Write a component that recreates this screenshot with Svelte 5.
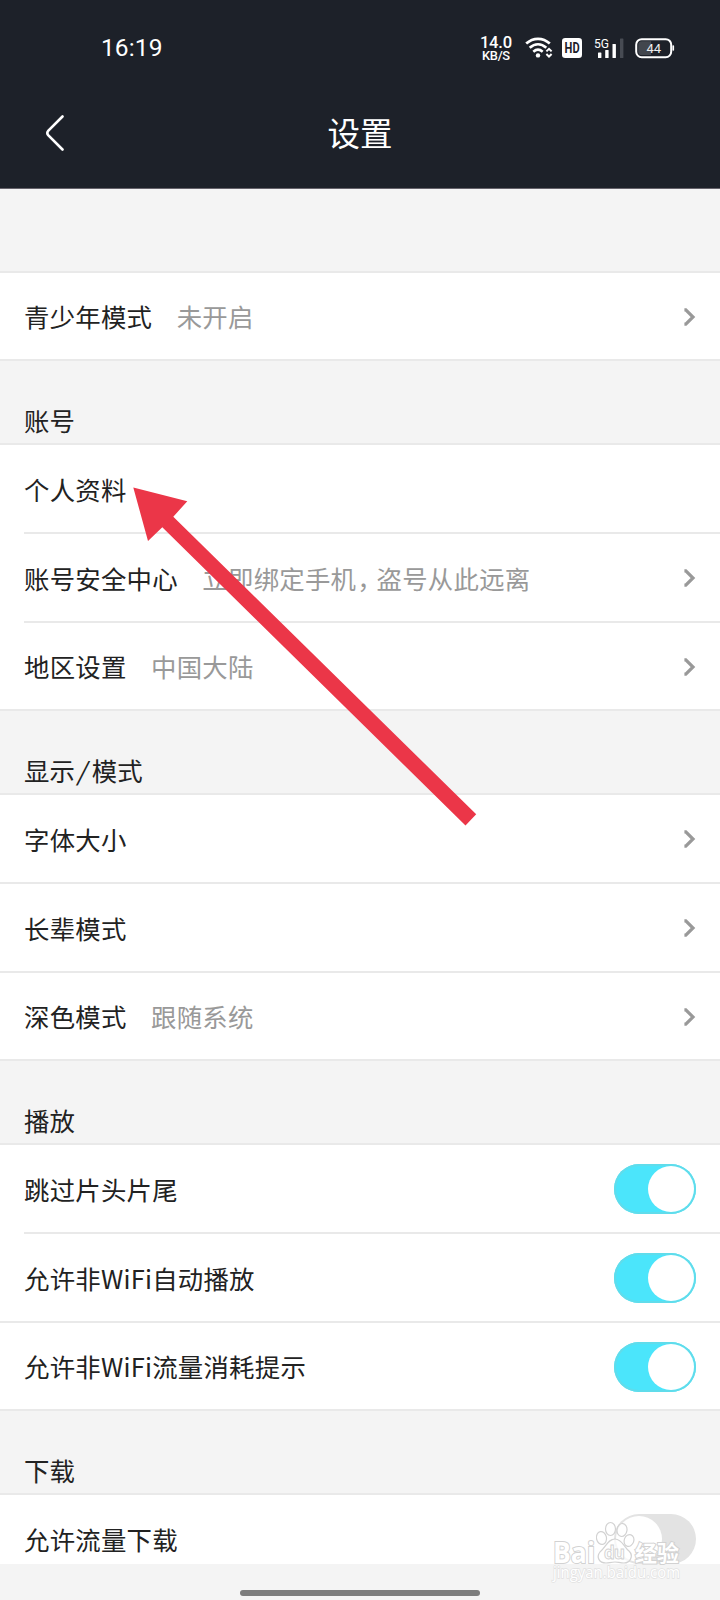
<script lang="ts">
	type Row = {
		label: string;
		hint?: string;
		toggle?: boolean;
		arrow?: boolean;
		inset?: boolean;
	};

	type Section = { title: string; rows: Row[] };

	let sections: Section[] = $state([
		{
			title: '',
			rows: [{ label: '青少年模式', hint: '未开启', arrow: true }]
		},
		{
			title: '账号',
			rows: [
				{ label: '个人资料', inset: true },
				{ label: '账号安全中心', hint: '立即绑定手机，盗号从此远离', arrow: true, inset: true },
				{ label: '地区设置', hint: '中国大陆', arrow: true }
			]
		},
		{
			title: '显示/模式',
			rows: [
				{ label: '字体大小', arrow: true },
				{ label: '长辈模式', arrow: true },
				{ label: '深色模式', hint: '跟随系统', arrow: true }
			]
		},
		{
			title: '播放',
			rows: [
				{ label: '跳过片头片尾', toggle: true, inset: true },
				{ label: '允许非WiFi自动播放', toggle: true },
				{ label: '允许非WiFi流量消耗提示', toggle: true }
			]
		},
		{
			title: '下载',
			rows: [{ label: '允许流量下载', toggle: false }]
		}
	]);
</script>

<div class="screen">
	<header class="header">
		<div class="status">
			<span class="time">16:19</span>
			<div class="indicators">
				<div class="speed">
					<span class="rate">14.0</span>
					<span class="unit">KB/S</span>
				</div>
				<svg class="wifi" width="28" height="22" viewBox="0 0 28 22" fill="none" stroke="#fff">
					<path d="M1.2 6.6C8.2 0.2 17.8 0.2 24.8 6.6" stroke-width="2.7" />
					<path d="M4.7 10.8C9.8 6.2 16.2 6.2 21.3 10.8" stroke-width="2.7" />
					<path d="M8.3 14.7C11.3 12.1 14.7 12.1 17.7 14.7" stroke-width="2.6" />
					<circle cx="13" cy="18.4" r="2.2" fill="#fff" stroke="none" />
					<path d="M21.4 14.4L24 11.8L26.6 14.4M21.4 17L24 19.6L26.6 17" stroke-width="2" />
				</svg>
				<svg class="hd" width="20" height="20" viewBox="0 0 20 20">
					<rect width="20" height="20" rx="3.2" fill="#fff" />
					<text x="2.6" y="15.2" font-size="14.6" textLength="15" lengthAdjust="spacingAndGlyphs">HD</text>
				</svg>
				<svg class="signal" width="30" height="22" viewBox="0 0 30 22" fill="#fff">
					<text x="0" y="10" font-size="13" textLength="15" lengthAdjust="spacingAndGlyphs">5G</text>
					<rect x="4" y="14.5" width="3.4" height="5.5" rx="0.6" />
					<rect x="11.2" y="12" width="3.4" height="8" rx="0.6" />
					<rect x="18.5" y="6" width="3.4" height="14" rx="0.6" />
					<rect x="26" y="0.5" width="3.4" height="19.5" rx="0.6" fill="#474b53" />
				</svg>
				<svg class="battery" width="40" height="22" viewBox="0 0 40 22">
					<rect x="1.2" y="1.2" width="35" height="18" rx="5.5" fill="none" stroke="#fff" stroke-width="2" />
					<path d="M7 3.3H16V17.1H7Q3.3 17.1 3.3 13.4V7Q3.3 3.3 7 3.3Z" fill="#42464d" />
					<rect x="37.4" y="7.2" width="1.7" height="5.6" rx="0.8" fill="#fff" />
					<text x="18.7" y="14.6" font-size="13" text-anchor="middle" fill="#eee">44</text>
				</svg>
			</div>
		</div>
		<nav class="nav">
			<svg class="back" width="20" height="36" viewBox="0 0 20 36" fill="none">
				<path
					d="M17.5 1.5L3.4 15.6Q1.2 18 3.4 20.4L17.5 34.5"
					stroke="#fff"
					stroke-width="2.6"
					stroke-linecap="round"
				/>
			</svg>
			<h1>设置</h1>
		</nav>
	</header>

	<main class="list">
		{#each sections as section}
			<section>
				<h2 class:blank={!section.title}>
					{#each section.title.split('/') as part, i}{#if i > 0}<span class="slash">/</span>{/if}{part}{/each}
				</h2>
				{#each section.rows as row}
					<div class="row" class:inset={row.inset}>
						<span class="label">{row.label}</span>
						{#if row.hint}
							<span class="hint">
								{#each row.hint.split('，') as part, i}{#if i > 0}<span class="comma">，</span>{/if}{part}{/each}
							</span>
						{/if}
						{#if row.arrow}
							<svg class="end arrow" width="12" height="18" viewBox="0 0 12 18" fill="none">
								<path d="M0.4 1.8L1.8 1.8L9 9L1.8 16.2L0.4 16.2" stroke="#999" stroke-width="3.2" />
							</svg>
						{:else if row.toggle !== undefined}
							<button
								class="end toggle"
								class:on={row.toggle}
								aria-label={row.label}
								onclick={() => (row.toggle = !row.toggle)}
							>
								<span class="knob"></span>
							</button>
						{/if}
					</div>
				{/each}
			</section>
		{/each}
	</main>

	<footer class="gesture">
		<div class="pill"></div>
	</footer>

	<svg class="pointer" width="346" height="342" viewBox="0 0 346 342">
		<polygon points="1.3,1.5 55.3,15.2 41.3,30.7 344.2,328.3 333.5,339.5 30.3,41.3 16,55" fill="#eb3648" />
	</svg>

	<svg class="watermark" width="140" height="72" viewBox="0 0 140 72" fill="#fff" stroke="#d2d2d2">
		<g paint-order="stroke" stroke-width="2" font-weight="700">
			<text x="3" y="45.5" font-size="29" textLength="42" lengthAdjust="spacingAndGlyphs">Bai</text>
			<text class="cjk" x="85" y="43.5" font-size="22" textLength="44">经验</text>
		</g>
		<g stroke-width="1.2" fill-opacity="0.7">
			<ellipse cx="51.5" cy="21" rx="5" ry="6.5" transform="rotate(-12 51.5 21)" />
			<ellipse cx="60.5" cy="12" rx="5" ry="6.5" />
			<ellipse cx="72" cy="13" rx="5" ry="6.5" transform="rotate(8 72 13)" />
			<ellipse cx="79" cy="23.5" rx="4.8" ry="6" transform="rotate(20 79 23.5)" />
			<path
				d="M65 22C72 22 74 30 79 34C84 39 80 46 74 46C70 46 68 45 65 45C61 45 59 46 56 46C49 46 46 40 50 35C56 30 58 22 65 22Z"
			/>
		</g>
		<text x="54" y="41.5" font-size="17" font-weight="700" stroke-width="0.9" textLength="21">du</text>
		<text
			x="3"
			y="61"
			font-size="16"
			stroke="#e1e1e1"
			stroke-width="1.4"
			paint-order="stroke"
			textLength="127"
			lengthAdjust="spacingAndGlyphs">jingyan.baidu.com</text
		>
	</svg>
</div>

<style>
	:global(body) {
		margin: 0;
		background: #f4f4f4;
	}

	.screen {
		position: relative;
		display: flex;
		flex-direction: column;
		width: 720px;
		height: 1600px;
		overflow: hidden;
		background: #f4f4f4;
		color: #222;
		font-family: 'Noto Sans CJK SC', sans-serif;
	}

	.header {
		box-sizing: border-box;
		flex: none;
		height: 189px;
		background: #1d2129;
		border-bottom: 1px solid #66636b;
		color: #fff;
	}

	.status {
		display: flex;
		align-items: center;
		justify-content: space-between;
		height: 96px;
		padding: 0 45px 0 101px;
		font-family: Roboto, sans-serif;
	}

	.time {
		font-size: 24.5px;
		line-height: 28px;
		padding-bottom: 1px;
		letter-spacing: 0.1px;
	}

	.indicators {
		display: flex;
		align-items: center;
	}

	.speed {
		display: flex;
		flex-direction: column;
		align-items: center;
		font-weight: 500;
	}

	.rate {
		font-size: 16.6px;
		line-height: 14px;
		letter-spacing: -0.2px;
	}

	.unit {
		font-size: 12.8px;
		line-height: 11px;
		letter-spacing: -0.3px;
	}

	.wifi {
		margin: 0 9px 0 13px;
	}

	.hd {
		margin-right: 12px;
		color: #1d2129;
		fill: currentColor;
		font-weight: 700;
	}

	.signal {
		margin: 1px 11px 0 0;
	}

	.battery {
		margin-top: 1px;
	}

	.nav {
		display: grid;
		grid-template-columns: 160px 1fr 160px;
		align-items: center;
		height: 74px;
	}

	.back {
		margin-left: 45px;
	}

	h1 {
		margin: 0;
		padding-bottom: 3px;
		font-size: 32.5px;
		font-weight: 400;
		line-height: 48px;
		text-align: center;
	}

	.list {
		flex: none;
		height: 1375px;
		overflow: hidden;
	}

	h2 {
		box-sizing: border-box;
		display: flex;
		align-items: flex-end;
		height: 86px;
		margin: 0;
		padding: 0 24px 5px;
		border-top: 2px solid #e9e9e9;
		border-bottom: 2px solid #e9e9e9;
		font-size: 25.4px;
		font-weight: 400;
		line-height: 36px;
	}

	h2.blank {
		height: 84px;
		border-top: 0;
	}

	.slash {
		margin: 0 3.5px;
		font-weight: 300;
		transform: scaleX(1.5);
	}

	.row {
		position: relative;
		box-sizing: border-box;
		display: flex;
		align-items: center;
		height: 89px;
		padding: 0 24px 2px;
		background: #fff;
		font-size: 25.4px;
		line-height: 36px;
		letter-spacing: 0.25px;
		white-space: nowrap;
	}

	section:not(:last-child) .row:last-child {
		height: 86px;
		padding-bottom: 0;
	}

	.row:not(:last-child)::after {
		content: '';
		position: absolute;
		right: 0;
		bottom: 0;
		left: 0;
		height: 2px;
		background: #e9e9e9;
	}

	.row.inset::after {
		left: 24px;
	}

	.hint {
		margin-left: 24.5px;
		color: #999;
	}

	.comma {
		margin-left: 1px;
		letter-spacing: -6px;
	}

	.end {
		flex: none;
		margin-top: 1.5px;
		margin-left: auto;
	}

	.toggle {
		box-sizing: border-box;
		display: flex;
		justify-content: flex-start;
		width: 82px;
		height: 50px;
		padding: 2px;
		border: 0;
		border-radius: 25px;
		background: #e3e3e3;
	}

	.toggle.on {
		justify-content: flex-end;
		background: #4be5fb;
		box-shadow: inset 0 0 0 2px #60dceb;
	}

	.knob {
		width: 46px;
		height: 46px;
		border-radius: 50%;
		background: #fff;
	}

	.gesture {
		display: flex;
		flex: 1;
		align-items: flex-end;
		justify-content: center;
		padding-bottom: 4px;
	}

	.pill {
		width: 240px;
		height: 6px;
		border-radius: 3px;
		background: #7d7d7d;
	}

	.pointer {
		position: absolute;
		top: 486px;
		left: 132px;
	}

	.watermark {
		position: absolute;
		top: 1517px;
		left: 550px;
		font-family: 'Open Sans', sans-serif;
	}

	.cjk {
		font-family: 'Noto Sans CJK SC', sans-serif;
	}
</style>
